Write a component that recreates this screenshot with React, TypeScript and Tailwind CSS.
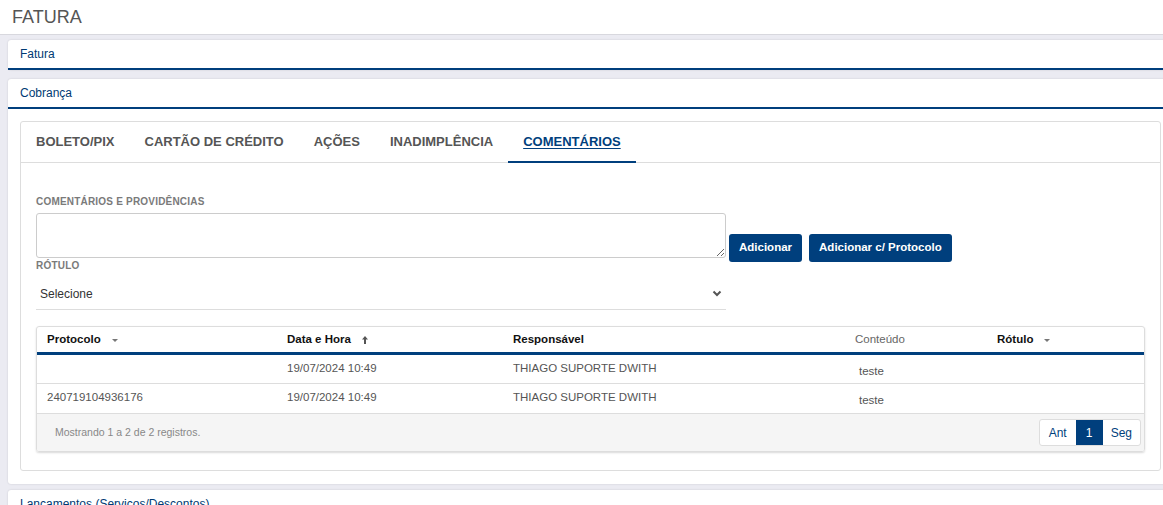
import React from "react";

const BLUE = "bg-[#003f7d]";

const tabs = ["BOLETO/PIX", "CARTÃO DE CRÉDITO", "AÇÕES", "INADIMPLÊNCIA", "COMENTÁRIOS"];

const rows = [
  { protocolo: "", data: "19/07/2024 10:49", responsavel: "THIAGO SUPORTE DWITH", conteudo: "teste", rotulo: "" },
  { protocolo: "240719104936176", data: "19/07/2024 10:49", responsavel: "THIAGO SUPORTE DWITH", conteudo: "teste", rotulo: "" },
];

const cols = "grid grid-cols-[240px_226px_342px_142px_1fr]";

function Caret() {
  return (
    <svg width="8" height="5" viewBox="0 0 8 5" className="ml-[10px] mt-[2px]">
      <path d="M1 1h6L4 4z" fill="#777" />
    </svg>
  );
}

function ArrowUp() {
  return (
    <svg width="8" height="10" viewBox="0 0 8 10" className="ml-[10px] mt-[1px]">
      <path d="M4 1L1 4.5h2V9h2V4.5h2z" fill="#555" />
    </svg>
  );
}

function PanelHeading({ title }: { title: string }) {
  return (
    <div className="h-[30px] flex items-center px-3 border-b-[2px] border-[#003f7d] text-[12px] text-[#003a73]">
      {title}
    </div>
  );
}

export default function App() {
  return (
    <div className="w-[1163px] h-[505px] overflow-hidden bg-[#ebebf2] font-['Liberation_Sans',Arial,sans-serif]">
      {/* page title */}
      <div className="h-[35px] bg-white border-b border-[#d8d8de] flex items-center px-3">
        <h1 className="text-[18px] text-[#555]">FATURA</h1>
      </div>

      <div className="pl-2 -mr-3 pt-[5px]">
        <div className="bg-white rounded-[3px] shadow-[0_0_2px_rgba(0,0,0,0.15)]">
          <PanelHeading title="Fatura" />
        </div>

        <div className="mt-[9px] bg-white rounded-[3px] shadow-[0_0_2px_rgba(0,0,0,0.15)]">
          <PanelHeading title="Cobrança" />
          <div className="pt-3 pl-3 pr-[14px] pb-[13px]">
            <div className="border border-[#ddd] rounded-[3px]">
              {/* tabs */}
              <div className="h-[41px] flex border-b border-[#ddd]">
                {tabs.map((t) => {
                  const active = t === "COMENTÁRIOS";
                  return (
                    <div
                      key={t}
                      className={`px-[15px] flex items-center text-[13px] font-bold ${
                        active
                          ? "text-[#003f7d] underline underline-offset-2 border-b-2 border-[#003f7d] -mb-px"
                          : "text-[#555]"
                      }`}
                    >
                      {t}
                    </div>
                  );
                })}
              </div>

              <div className="px-[15px] pt-[33px] pb-[18px]">
                <div className="text-[10px] tracking-[0.2px] font-bold text-[#7a7a7a] leading-[12px]">
                  COMENTÁRIOS E PROVIDÊNCIAS
                </div>
                <div className="flex items-start mt-[5px]">
                  <textarea className="w-[690px] h-[45px] border border-[#ccc] rounded-[3px] resize-y" />
                  <div className="flex gap-[7px] ml-[3px] mt-[21px] -mb-[5px]">
                    <button className={`${BLUE} h-[28px] px-[10px] rounded-[3px] text-white text-[11.5px] font-bold`}>
                      Adicionar
                    </button>
                    <button className={`${BLUE} h-[28px] px-[10px] rounded-[3px] text-white text-[11.5px] font-bold`}>
                      Adicionar c/ Protocolo
                    </button>
                  </div>
                </div>
                <div className="mt-[2px] text-[10px] tracking-[0.2px] font-bold text-[#7a7a7a] leading-[12px]">RÓTULO</div>
                <div className="w-[690px] h-[32px] mt-[6px] border-b border-[#ddd] flex items-center justify-between pl-1 pr-[4px]">
                  <span className="text-[12px] text-[#333]">Selecione</span>
                  <svg width="10" height="7" viewBox="0 0 10 7">
                    <path d="M1.5 1.5L5 5l3.5-3.5" stroke="#555" strokeWidth="2" fill="none" />
                  </svg>
                </div>

                {/* comments table */}
                <div className="mt-[16px] border border-[#ddd] rounded-[3px] shadow-[0_1px_2px_rgba(0,0,0,0.15)] overflow-hidden">
                  <div className={`${cols} h-[28px] items-center border-b-[3px] border-[#003f7d] text-[11.5px]`}>
                    <div className="pl-[10px] flex items-center font-bold text-[#111]">
                      Protocolo <Caret />
                    </div>
                    <div className="pl-[10px] flex items-center font-bold text-[#111]">
                      Data e Hora <ArrowUp />
                    </div>
                    <div className="pl-[10px] font-bold text-[#111]">Responsável</div>
                    <div className="pl-[10px] text-[#666]">Conteúdo</div>
                    <div className="pl-[10px] flex items-center font-bold text-[#111]">
                      Rótulo <Caret />
                    </div>
                  </div>
                  {rows.map((r, i) => (
                    <div
                      key={i}
                      className={`${cols} ${i === 0 ? "h-[29px]" : "h-[30px]"} pt-[5px] border-b border-[#ddd] text-[11.5px] text-[#555]`}
                    >
                      <div className="pl-[10px]">{r.protocolo}</div>
                      <div className="pl-[10px]">{r.data}</div>
                      <div className="pl-[10px]">{r.responsavel}</div>
                      <div className="pl-[14px] pt-[3px]">{r.conteudo}</div>
                      <div className="pl-[10px]">{r.rotulo}</div>
                    </div>
                  ))}
                  <div className="h-[37px] bg-[#f5f5f5] flex items-center justify-between pl-[18px] pr-[3px]">
                    <span className="text-[10.5px] text-[#888]">Mostrando 1 a 2 de 2 registros.</span>
                    <div className="flex h-[27px] border border-[#ddd] rounded-[3px] bg-white text-[12px] overflow-hidden">
                      <span className="px-[9px] flex items-center text-[#003f7d]">Ant</span>
                      <span className={`${BLUE} w-[27px] flex items-center justify-center text-white`}>1</span>
                      <span className="px-[8px] flex items-center text-[#003f7d]">Seg</span>
                    </div>
                  </div>
                </div>
              </div>
            </div>
          </div>
        </div>

        <div className="mt-[6px] bg-white rounded-[3px] shadow-[0_0_2px_rgba(0,0,0,0.15)]">
          <PanelHeading title="Lançamentos (Serviços/Descontos)" />
        </div>
      </div>
    </div>
  );
}
